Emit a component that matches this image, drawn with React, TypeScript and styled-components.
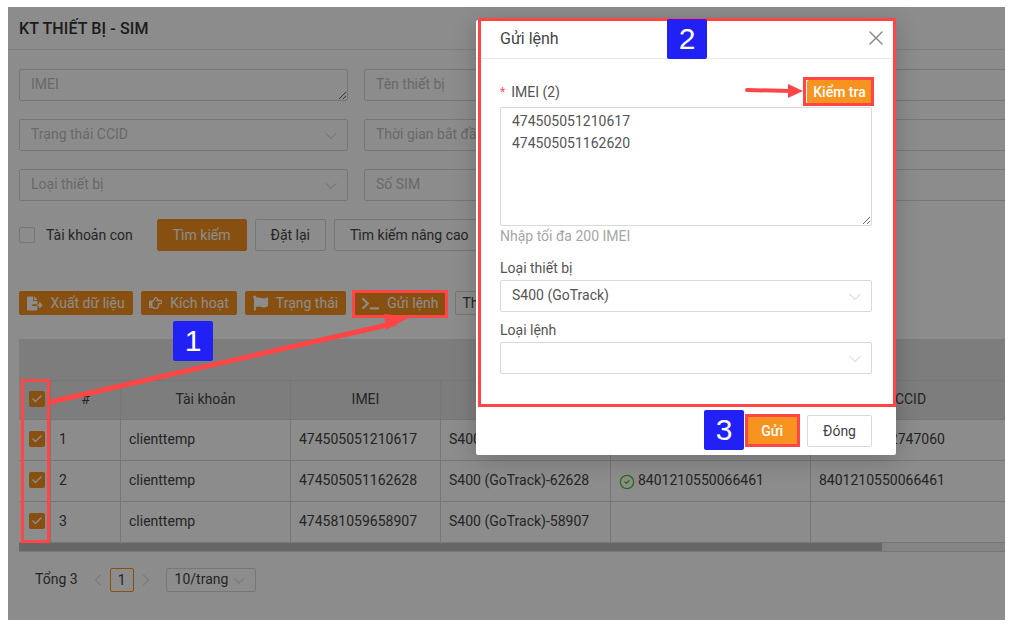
import { Check, ChevronDown, ChevronLeft, ChevronRight, CircleCheck, X } from "lucide-react";
import { FaFileExport, FaFlag, FaRegHandPointRight, FaTerminal } from "react-icons/fa";
import styled, { createGlobalStyle } from "styled-components";

const ORANGE = "#f7931e";
const RED = "#ff4545";
const BORDER = "#d9d9d9";

const GlobalStyle = createGlobalStyle`
  * {
    box-sizing: border-box;
  }
  body {
    margin: 0;
    background: #fff;
    font-family: Roboto, "Noto Sans", Arial, sans-serif;
    font-size: 14px;
    color: #444;
  }
  textarea {
    font-family: inherit;
  }
`;

const Screen = styled.div`
  position: relative;
  width: 1011px;
  height: 627px;
  padding: 7px 6px 7px 8px;
  overflow: hidden;
`;

const Frame = styled.div`
  position: relative;
  height: 613px;
  background: #fff;
  overflow: hidden;
`;

const Overlay = styled.div`
  position: absolute;
  inset: 0;
  background: rgba(0, 0, 0, 0.45);
`;

const PageHeader = styled.div`
  display: flex;
  align-items: center;
  height: 43px;
  padding: 0 11px;
  border-bottom: 1px solid #e8e8e8;
  font-size: 16px;
  font-weight: 500;
  letter-spacing: 0.12px;
  color: #333;
`;

const PageBody = styled.div`
  padding: 19px 0 0 11px;
`;

const FilterGrid = styled.div`
  display: grid;
  grid-template-columns: repeat(3, 329px);
  grid-auto-rows: 32px;
  gap: 18px 16px;
`;

const FilterArea = styled.textarea`
  width: 100%;
  height: 32px;
  padding: 3px 11px;
  border: 1px solid ${BORDER};
  border-radius: 2px;
  font-size: 14px;
  line-height: 22px;
  resize: vertical;
  outline: none;
  &::placeholder {
    color: #bfbfbf;
  }
`;

const SelectBox = styled.div`
  display: flex;
  align-items: center;
  justify-content: space-between;
  height: 32px;
  padding: 0 6px 2px 11px;
  border: 1px solid ${BORDER};
  border-radius: 2px;
  background: #fff;
  color: #bfbfbf;
  white-space: nowrap;
`;

const ChevronIcon = styled(ChevronDown)`
  flex: none;
  margin-top: 3px;
  color: #bfbfbf;
`;

const SearchRow = styled.div`
  display: flex;
  align-items: center;
  gap: 8px;
  margin-top: 18px;
`;

const SubAccount = styled.label`
  display: flex;
  align-items: center;
  gap: 11px;
  margin-right: 16px;
  color: #444;
`;

const EmptyBox = styled.span`
  width: 16px;
  height: 16px;
  border: 1px solid ${BORDER};
  border-radius: 2px;
`;

const Button = styled.button<{ $primary?: boolean }>`
  flex: none;
  height: 32px;
  padding: 0 15px;
  border: 1px solid ${(p) => (p.$primary ? ORANGE : BORDER)};
  border-radius: 2px;
  background: ${(p) => (p.$primary ? ORANGE : "#fff")};
  color: ${(p) => (p.$primary ? "#fff" : "#444")};
  font-family: inherit;
  font-size: 14px;
`;

const Toolbar = styled.div`
  display: flex;
  gap: 8px;
  margin-top: 40px;
`;

const ActionButton = styled.button<{ $outline?: boolean }>`
  display: flex;
  align-items: center;
  flex: none;
  gap: 8px;
  height: 24px;
  padding: 0 ${(p) => (p.$outline ? 7 : 8)}px;
  border: ${(p) => (p.$outline ? `1px solid ${BORDER}` : "none")};
  border-radius: 2px;
  background: ${(p) => (p.$outline ? "#fff" : ORANGE)};
  color: ${(p) => (p.$outline ? "#444" : "#fff")};
  font-family: inherit;
  font-size: 14px;
`;

const ActionIcon = styled.span<{ $width: number }>`
  display: flex;
  align-items: center;
  justify-content: center;
  flex: none;
  width: ${(p) => p.$width}px;
`;

const TableBand = styled.div`
  height: 41px;
  margin-top: 24px;
  background: #e4e4e4;
`;

const TableWrap = styled.div`
  overflow: hidden;
`;

const Table = styled.table`
  width: 992px;
  table-layout: fixed;
  border-collapse: separate;
  border-spacing: 0;
`;

const HeadCell = styled.th`
  height: 40px;
  padding: 0 8px 2px;
  border-top: 1px solid ${BORDER};
  border-bottom: 1px solid ${BORDER};
  border-right: 1px solid ${BORDER};
  background: #e4e4e4;
  font-weight: 400;
  color: #444;
`;

const Cell = styled.td`
  height: 41px;
  padding: 0 8px 2px;
  border-bottom: 1px solid ${BORDER};
  border-right: 1px solid ${BORDER};
  white-space: nowrap;
  color: #444;
`;

const CheckCell = styled(Cell)`
  padding: 0 0 2px 10px;
`;

const CheckHeadCell = styled(HeadCell)`
  padding: 0 0 2px 10px;
`;

const CheckedBox = styled.span`
  display: flex;
  align-items: center;
  justify-content: center;
  width: 16px;
  height: 16px;
  border-radius: 2px;
  background: ${ORANGE};
  color: #fff;
`;

const CcidStatus = styled.span`
  display: flex;
  align-items: center;
  gap: 3px;
`;

const OkIcon = styled(CircleCheck)`
  flex: none;
  margin-top: 3px;
  color: #52c41a;
`;

const ScrollTrack = styled.div`
  height: 9px;
  border-bottom: 1px solid ${BORDER};
  background: #f0f0f0;
`;

const ScrollThumb = styled.div`
  width: 863px;
  height: 8px;
  background: #bcbcbc;
`;

const Pagination = styled.div`
  display: flex;
  align-items: center;
  height: 24px;
  margin-top: 16px;
  padding-left: 16px;
`;

const Total = styled.span`
  margin-right: 10px;
  padding-bottom: 2px;
`;

const PageArrow = styled.span`
  display: flex;
  align-items: center;
  justify-content: center;
  width: 20px;
  height: 24px;
  color: #bfbfbf;
`;

const PageNumber = styled.span`
  display: flex;
  align-items: center;
  justify-content: center;
  width: 24px;
  height: 24px;
  margin: 0 2px;
  border: 1px solid ${ORANGE};
  border-radius: 2px;
  color: #444;
`;

const PageSize = styled.div`
  display: flex;
  align-items: center;
  justify-content: space-between;
  width: 90px;
  height: 24px;
  margin-left: 10px;
  padding: 0 7px 2px 8px;
  border: 1px solid ${BORDER};
  border-radius: 2px;
`;

const Dialog = styled.div`
  position: absolute;
  top: 13px;
  left: 468px;
  width: 420px;
  height: 435px;
  background: #fff;
  border-radius: 2px;
  box-shadow: 0 4px 24px rgba(0, 0, 0, 0.2);
`;

const DialogHeader = styled.div`
  display: flex;
  align-items: center;
  justify-content: space-between;
  height: 39px;
  padding: 0 8px 2px 24px;
  border-bottom: 1px solid #e8e8e8;
  font-size: 16px;
  color: #444;
`;

const CloseIcon = styled(X)`
  color: #8c8c8c;
`;

const DialogBody = styled.div`
  height: 356px;
  padding: 21px 24px 0;
`;

const ImeiHead = styled.div`
  display: flex;
  align-items: center;
  justify-content: space-between;
  height: 24px;
  margin-bottom: 3px;
`;

const FieldLabel = styled.div`
  display: flex;
  align-items: center;
  height: 22px;
  color: #555;
`;

const Required = styled.span`
  margin-right: 6px;
  color: #ff4d4f;
  font-size: 12px;
`;

const CheckButton = styled.button`
  width: 65px;
  height: 24px;
  border: none;
  border-radius: 2px;
  background: ${ORANGE};
  color: #fff;
  font-family: inherit;
  font-size: 14px;
  font-weight: 500;
  padding: 0;
`;

const ImeiArea = styled.textarea`
  display: block;
  width: 100%;
  height: 119px;
  padding: 2px 11px;
  border: 1px solid ${BORDER};
  border-radius: 2px;
  font-size: 14px;
  line-height: 22px;
  color: #555;
  resize: vertical;
  outline: none;
`;

const Hint = styled.div`
  height: 20px;
  line-height: 20px;
  color: #a6a6a6;
`;

const DialogSelect = styled(SelectBox)`
  margin-top: 1px;
  color: #555;
`;

const FieldGap = styled.div<{ $size: number }>`
  height: ${(p) => p.$size}px;
`;

const DialogFooter = styled.div`
  display: flex;
  justify-content: flex-end;
  gap: 8px;
  padding: 0 24px;
`;

const SendButton = styled(Button)`
  font-weight: 500;
`;

const Highlight = styled.div<{ $x: number; $y: number; $w: number; $h: number }>`
  position: absolute;
  left: ${(p) => p.$x}px;
  top: ${(p) => p.$y}px;
  width: ${(p) => p.$w}px;
  height: ${(p) => p.$h}px;
  border: 3px solid ${RED};
`;

const StepBadge = styled.div<{ $x: number; $y: number }>`
  position: absolute;
  left: ${(p) => p.$x}px;
  top: ${(p) => p.$y}px;
  display: flex;
  align-items: center;
  justify-content: center;
  width: 40px;
  height: 40px;
  border-radius: 2px;
  background: #2121f5;
  color: #fff;
  font-family: "Liberation Sans", Arial, sans-serif;
  font-size: 30px;
`;

const ArrowLayer = styled.svg`
  position: absolute;
  inset: 0;
  pointer-events: none;
`;

const ColumnSizes = [32, 70, 170, 150, 170, 200, 200];

const rows = [
  { id: 1, account: "clienttemp", imei: "474505051210617", device: "S400 (GoTrack)-10617", ccid: "", sim: "8401210552747060" },
  { id: 2, account: "clienttemp", imei: "474505051162628", device: "S400 (GoTrack)-62628", ccid: "8401210550066461", sim: "8401210550066461" },
  { id: 3, account: "clienttemp", imei: "474581059658907", device: "S400 (GoTrack)-58907", ccid: "", sim: "" },
];

function Tick() {
  return (
    <CheckedBox>
      <Check size={12} strokeWidth={3} />
    </CheckedBox>
  );
}

function Chevron() {
  return <ChevronIcon size={20} strokeWidth={1} />;
}

function App() {
  return (
    <Screen>
      <GlobalStyle />
      <Frame>
        <PageHeader>KT THIẾT BỊ - SIM</PageHeader>
        <PageBody>
          <FilterGrid>
            <FilterArea placeholder="IMEI" readOnly />
            <SelectBox>Tên thiết bị</SelectBox>
            <SelectBox />
            <SelectBox>
              Trạng thái CCID
              <Chevron />
            </SelectBox>
            <SelectBox>Thời gian bắt đầu</SelectBox>
            <SelectBox />
            <SelectBox>
              Loại thiết bị
              <Chevron />
            </SelectBox>
            <SelectBox>Số SIM</SelectBox>
            <SelectBox />
          </FilterGrid>
          <SearchRow>
            <SubAccount>
              <EmptyBox />
              Tài khoản con
            </SubAccount>
            <Button $primary>Tìm kiếm</Button>
            <Button>Đặt lại</Button>
            <Button>Tìm kiếm nâng cao</Button>
          </SearchRow>
          <Toolbar>
            <ActionButton>
              <ActionIcon $width={15.6}>
                <FaFileExport size={19} />
              </ActionIcon>
              Xuất dữ liệu
            </ActionButton>
            <ActionButton>
              <ActionIcon $width={13.6}>
                <FaRegHandPointRight size={16} />
              </ActionIcon>
              Kích hoạt
            </ActionButton>
            <ActionButton>
              <ActionIcon $width={15}>
                <FaFlag size={16} />
              </ActionIcon>
              Trạng thái
            </ActionButton>
            <ActionButton>
              <ActionIcon $width={17}>
                <FaTerminal size={19} />
              </ActionIcon>
              Gửi lệnh
            </ActionButton>
            <ActionButton $outline>Thêm</ActionButton>
          </Toolbar>
          <TableBand />
          <TableWrap>
            <Table>
              <colgroup>
                {ColumnSizes.map((size, i) => (
                  <col key={i} width={size} />
                ))}
              </colgroup>
              <thead>
                <tr>
                  <CheckHeadCell>
                    <Tick />
                  </CheckHeadCell>
                  <HeadCell>#</HeadCell>
                  <HeadCell>Tài khoản</HeadCell>
                  <HeadCell>IMEI</HeadCell>
                  <HeadCell>Tên thiết bị</HeadCell>
                  <HeadCell>Trạng thái</HeadCell>
                  <HeadCell>CCID</HeadCell>
                </tr>
              </thead>
              <tbody>
                {rows.map((row) => (
                  <tr key={row.id}>
                    <CheckCell>
                      <Tick />
                    </CheckCell>
                    <Cell>{row.id}</Cell>
                    <Cell>{row.account}</Cell>
                    <Cell>{row.imei}</Cell>
                    <Cell>{row.device}</Cell>
                    <Cell>
                      {row.ccid && (
                        <CcidStatus>
                          <OkIcon size={16} strokeWidth={2} />
                          {row.ccid}
                        </CcidStatus>
                      )}
                    </Cell>
                    <Cell>{row.sim}</Cell>
                  </tr>
                ))}
              </tbody>
            </Table>
          </TableWrap>
          <ScrollTrack>
            <ScrollThumb />
          </ScrollTrack>
          <Pagination>
            <Total>Tổng 3</Total>
            <PageArrow>
              <ChevronLeft size={20} strokeWidth={1} />
            </PageArrow>
            <PageNumber>1</PageNumber>
            <PageArrow>
              <ChevronRight size={20} strokeWidth={1} />
            </PageArrow>
            <PageSize>
              10/trang
              <ChevronIcon size={18} strokeWidth={1} />
            </PageSize>
          </Pagination>
        </PageBody>
        <Overlay />
        <Dialog>
          <DialogHeader>
            Gửi lệnh
            <CloseIcon size={24} strokeWidth={1.5} />
          </DialogHeader>
          <DialogBody>
            <ImeiHead>
              <FieldLabel>
                <Required>*</Required>
                IMEI (2)
              </FieldLabel>
              <CheckButton>Kiểm tra</CheckButton>
            </ImeiHead>
            <ImeiArea readOnly defaultValue={"474505051210617\n474505051162620"} />
            <Hint>Nhập tối đa 200 IMEI</Hint>
            <FieldGap $size={11} />
            <FieldLabel>Loại thiết bị</FieldLabel>
            <DialogSelect>
              S400 (GoTrack)
              <Chevron />
            </DialogSelect>
            <FieldGap $size={7} />
            <FieldLabel>Loại lệnh</FieldLabel>
            <DialogSelect>
              <span />
              <Chevron />
            </DialogSelect>
          </DialogBody>
          <DialogFooter>
            <SendButton $primary>Gửi</SendButton>
            <Button>Đóng</Button>
          </DialogFooter>
        </Dialog>
      </Frame>

      <ArrowLayer width={1011} height={627} viewBox="0 0 1011 627">
        <line x1={50} y1={402} x2={396} y2={323} stroke={RED} strokeWidth={5} />
        <polygon points="386,330 410,317 384,314" fill={RED} />
        <line x1={747} y1={90} x2={792} y2={91} stroke={RED} strokeWidth={4} strokeLinecap="round" />
        <polygon points="788,84 803,91 788,98" fill={RED} />
      </ArrowLayer>
      <Highlight $x={352} $y={290} $w={96} $h={28} />
      <Highlight $x={21} $y={379} $w={29} $h={164} />
      <Highlight $x={478} $y={18} $w={418} $h={389} />
      <Highlight $x={803} $y={77} $w={71} $h={29} />
      <Highlight $x={745} $y={414} $w={55} $h={33} />
      <StepBadge $x={173} $y={321}>1</StepBadge>
      <StepBadge $x={667} $y={19}>2</StepBadge>
      <StepBadge $x={704} $y={410}>3</StepBadge>
    </Screen>
  );
}

export default App;
